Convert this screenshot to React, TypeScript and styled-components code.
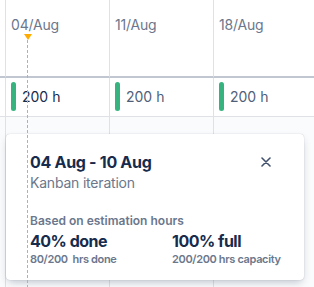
import React from 'react';
import styled, { createGlobalStyle } from 'styled-components';

const GlobalStyle = createGlobalStyle`
  html, body {
    margin: 0;
    padding: 0;
    background: #ffffff;
  }
  body {
    font-family: Inter, 'Noto Sans', sans-serif;
    -webkit-font-smoothing: antialiased;
  }
`;

const Page = styled.div`
  position: relative;
  width: 314px;
  height: 287px;
  overflow: hidden;
  background: #ffffff;
  display: flex;
  flex-direction: column;
`;

const Grid = styled.div`
  flex: 1;
  display: grid;
  grid-template-columns: 5px repeat(3, 104px);
  grid-template-rows: 78px 39px 1fr;
`;

const Gutter = styled.div<{ $row: number }>`
  grid-column: 1;
  grid-row: ${p => p.$row};
  border-bottom: ${p => (p.$row === 1 ? '2px solid #c1c7d0' : p.$row === 2 ? '1px solid #dfe1e6' : 'none')};
  background: ${p => (p.$row === 3 ? '#fafbfc' : '#ffffff')};
`;

const HeaderCell = styled.div`
  grid-row: 1;
  border-left: 1px solid #dfe1e6;
  border-bottom: 2px solid #c1c7d0;
  padding: 15px 0 0 5px;
  font-size: 14px;
  line-height: 20px;
  letter-spacing: -0.2px;
  color: #6b778c;
  white-space: nowrap;
`;

const RowCell = styled.div<{ $current?: boolean }>`
  grid-row: 2;
  border-left: 1px solid #dfe1e6;
  border-bottom: 1px solid #dfe1e6;
  padding: 4px 0 5px 5px;
  display: flex;
  align-items: center;
  gap: 6px;
  font-size: 14px;
  line-height: 20px;
  color: ${p => (p.$current ? '#172b4d' : '#505f79')};
  white-space: nowrap;
`;

const Bar = styled.span`
  align-self: stretch;
  width: 5px;
  border-radius: 3px;
  background: #36b37e;
`;

const FillCell = styled.div`
  grid-row: 3;
  border-left: 1px solid #dfe1e6;
  background: #fafbfc;
`;

const TodayMarker = styled.div`
  position: absolute;
  left: 23px;
  top: 34px;
  bottom: 0;
  width: 9px;
  z-index: 3;
  display: flex;
  flex-direction: column;
  align-items: center;
  pointer-events: none;
`;

const Triangle = styled.span`
  width: 0;
  height: 0;
  border-left: 4.5px solid transparent;
  border-right: 4.5px solid transparent;
  border-top: 6px solid #ffab00;
`;

const DashLine = styled.span`
  flex: 1;
  width: 1px;
  background: repeating-linear-gradient(to bottom, #ffab00 0 3px, transparent 3px 5px);
`;

const Card = styled.div`
  position: absolute;
  left: 6px;
  top: 134px;
  width: 298px;
  height: 146px;
  box-sizing: border-box;
  padding: 18px 26px 0 24px;
  background: #ffffff;
  border-radius: 4px;
  box-shadow: 0 4px 8px -2px rgba(9, 30, 66, 0.25), 0 0 1px rgba(9, 30, 66, 0.31);
  z-index: 2;
`;

const CardHeader = styled.div`
  display: flex;
  justify-content: space-between;
  align-items: flex-start;
`;

const Title = styled.div`
  font-size: 16px;
  line-height: 20px;
  font-weight: 700;
  letter-spacing: -0.3px;
  color: #172b4d;
`;

const Subtitle = styled.div`
  margin-top: 1px;
  font-size: 14px;
  line-height: 20px;
  letter-spacing: -0.2px;
  color: #6b778c;
`;

const CloseButton = styled.button`
  width: 24px;
  height: 24px;
  margin-top: -2px;
  padding: 0;
  border: none;
  background: transparent;
  display: flex;
  align-items: center;
  justify-content: center;
  cursor: pointer;
`;

const Caption = styled.div`
  margin-top: 20px;
  font-size: 12px;
  line-height: 16px;
  font-weight: 600;
  color: #6b778c;
`;

const Stats = styled.div`
  display: grid;
  grid-template-columns: 142px 1fr;
  margin-top: 2px;
`;

const StatValue = styled.div`
  font-size: 16px;
  line-height: 20px;
  font-weight: 700;
  letter-spacing: -0.5px;
  color: #172b4d;
`;

const StatNote = styled.div`
  margin-top: 1px;
  font-size: 11px;
  line-height: 14px;
  font-weight: 600;
  letter-spacing: -0.35px;
  color: #6b778c;
  white-space: pre;
`;

const weeks = ['04/Aug', '11/Aug', '18/Aug'];

export default function App() {
  return (
    <>
      <GlobalStyle />
      <Page>
        <Grid>
          <Gutter $row={1} />
          <Gutter $row={2} />
          <Gutter $row={3} />
          {weeks.map(w => (
            <HeaderCell key={w}>{w}</HeaderCell>
          ))}
          {weeks.map((w, i) => (
            <RowCell key={w} $current={i === 0}>
              <Bar />
              200 h
            </RowCell>
          ))}
          {weeks.map(w => (
            <FillCell key={w} />
          ))}
        </Grid>

        <Card>
          <CardHeader>
            <div>
              <Title>04 Aug - 10 Aug</Title>
              <Subtitle>Kanban iteration</Subtitle>
            </div>
            <CloseButton aria-label="Close">
              <svg width="10" height="10" viewBox="0 0 10 10" fill="none">
                <path d="M1 1l8 8M9 1L1 9" stroke="#42526e" strokeWidth="1.6" strokeLinecap="round" />
              </svg>
            </CloseButton>
          </CardHeader>
          <Caption>Based on estimation hours</Caption>
          <Stats>
            <div>
              <StatValue>40% done</StatValue>
              <StatNote>80/200  hrs done</StatNote>
            </div>
            <div>
              <StatValue>100% full</StatValue>
              <StatNote>200/200 hrs capacity</StatNote>
            </div>
          </Stats>
        </Card>

        <TodayMarker>
          <Triangle />
          <DashLine />
        </TodayMarker>
      </Page>
    </>
  );
}
